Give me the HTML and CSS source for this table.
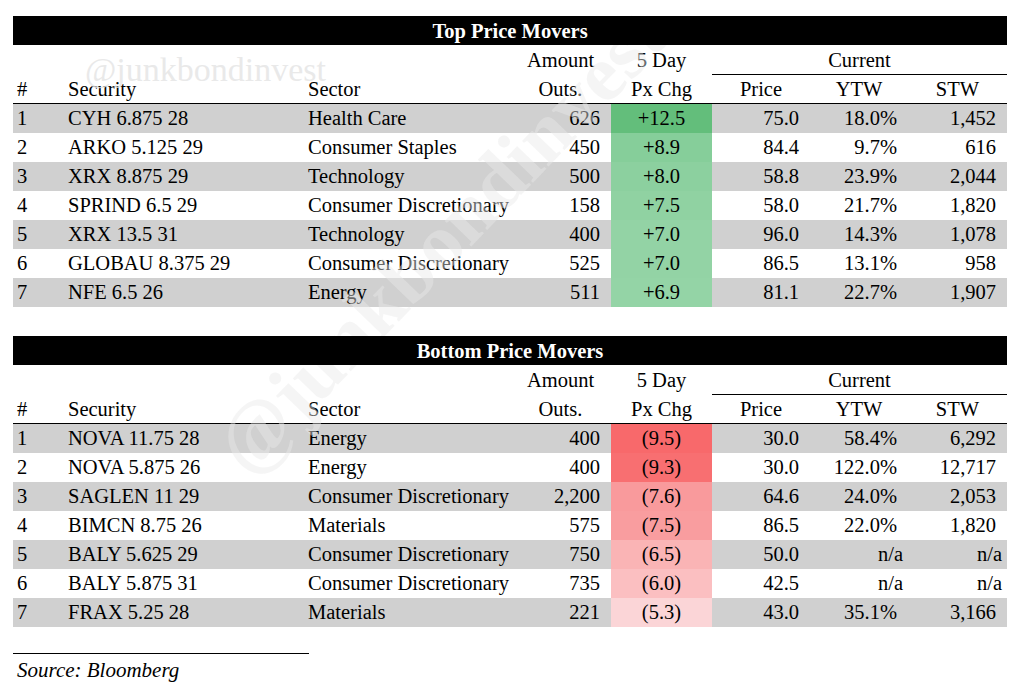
FILE: index.html
```html
<!DOCTYPE html>
<html>
<head>
<meta charset="utf-8">
<link rel="stylesheet" href="styles.css">
</head>
<body>
<div class="page">
  <section class="movers">
    <div class="title">Top Price Movers</div>
    <table>
      <colgroup>
        <col class="c-num"><col class="c-sec"><col class="c-sector"><col class="c-amt"><col class="c-chg"><col class="c-price"><col class="c-ytw"><col class="c-stw">
      </colgroup>
      <thead>
        <tr class="h1">
          <th></th><th></th><th></th><th class="ctr">Amount</th><th class="ctr">5 Day</th><th class="ctr current" colspan="3">Current</th>
        </tr>
        <tr class="h2">
          <th class="lft">#</th><th class="lft">Security</th><th class="lft">Sector</th><th class="ctr">Outs.</th><th class="ctr">Px Chg</th><th class="ctr">Price</th><th class="ctr">YTW</th><th class="ctr">STW</th>
        </tr>
      </thead>
      <tbody>
        <tr><td>1</td><td>CYH 6.875 28</td><td class="sector">Health Care</td><td class="num">626</td><td class="chg g1">+12.5</td><td class="num">75.0</td><td class="num">18.0%</td><td class="num">1,452</td></tr>
        <tr><td>2</td><td>ARKO 5.125 29</td><td class="sector">Consumer Staples</td><td class="num">450</td><td class="chg g2">+8.9</td><td class="num">84.4</td><td class="num">9.7%</td><td class="num">616</td></tr>
        <tr><td>3</td><td>XRX 8.875 29</td><td class="sector">Technology</td><td class="num">500</td><td class="chg g3">+8.0</td><td class="num">58.8</td><td class="num">23.9%</td><td class="num">2,044</td></tr>
        <tr><td>4</td><td>SPRIND 6.5 29</td><td class="sector">Consumer Discretionary</td><td class="num">158</td><td class="chg g4">+7.5</td><td class="num">58.0</td><td class="num">21.7%</td><td class="num">1,820</td></tr>
        <tr><td>5</td><td>XRX 13.5 31</td><td class="sector">Technology</td><td class="num">400</td><td class="chg g5">+7.0</td><td class="num">96.0</td><td class="num">14.3%</td><td class="num">1,078</td></tr>
        <tr><td>6</td><td>GLOBAU 8.375 29</td><td class="sector">Consumer Discretionary</td><td class="num">525</td><td class="chg g5">+7.0</td><td class="num">86.5</td><td class="num">13.1%</td><td class="num">958</td></tr>
        <tr><td>7</td><td>NFE 6.5 26</td><td class="sector">Energy</td><td class="num">511</td><td class="chg g6">+6.9</td><td class="num">81.1</td><td class="num">22.7%</td><td class="num">1,907</td></tr>
      </tbody>
    </table>
  </section>

  <section class="movers">
    <div class="title">Bottom Price Movers</div>
    <table>
      <colgroup>
        <col class="c-num"><col class="c-sec"><col class="c-sector"><col class="c-amt"><col class="c-chg"><col class="c-price"><col class="c-ytw"><col class="c-stw">
      </colgroup>
      <thead>
        <tr class="h1">
          <th></th><th></th><th></th><th class="ctr">Amount</th><th class="ctr">5 Day</th><th class="ctr current" colspan="3">Current</th>
        </tr>
        <tr class="h2">
          <th class="lft">#</th><th class="lft">Security</th><th class="lft">Sector</th><th class="ctr">Outs.</th><th class="ctr">Px Chg</th><th class="ctr">Price</th><th class="ctr">YTW</th><th class="ctr">STW</th>
        </tr>
      </thead>
      <tbody>
        <tr><td>1</td><td>NOVA 11.75 28</td><td class="sector">Energy</td><td class="num">400</td><td class="chg r1">(9.5)</td><td class="num">30.0</td><td class="num">58.4%</td><td class="num">6,292</td></tr>
        <tr><td>2</td><td>NOVA 5.875 26</td><td class="sector">Energy</td><td class="num">400</td><td class="chg r2">(9.3)</td><td class="num">30.0</td><td class="num">122.0%</td><td class="num">12,717</td></tr>
        <tr><td>3</td><td>SAGLEN 11 29</td><td class="sector">Consumer Discretionary</td><td class="num">2,200</td><td class="chg r3">(7.6)</td><td class="num">64.6</td><td class="num">24.0%</td><td class="num">2,053</td></tr>
        <tr><td>4</td><td>BIMCN 8.75 26</td><td class="sector">Materials</td><td class="num">575</td><td class="chg r4">(7.5)</td><td class="num">86.5</td><td class="num">22.0%</td><td class="num">1,820</td></tr>
        <tr><td>5</td><td>BALY 5.625 29</td><td class="sector">Consumer Discretionary</td><td class="num">750</td><td class="chg r5">(6.5)</td><td class="num">50.0</td><td class="num na">n/a</td><td class="num na">n/a</td></tr>
        <tr><td>6</td><td>BALY 5.875 31</td><td class="sector">Consumer Discretionary</td><td class="num">735</td><td class="chg r6">(6.0)</td><td class="num">42.5</td><td class="num na">n/a</td><td class="num na">n/a</td></tr>
        <tr><td>7</td><td>FRAX 5.25 28</td><td class="sector">Materials</td><td class="num">221</td><td class="chg r7">(5.3)</td><td class="num">43.0</td><td class="num">35.1%</td><td class="num">3,166</td></tr>
      </tbody>
    </table>
  </section>

  <div class="source">Source: Bloomberg</div>

  <span class="wm wm-small">@junkbondinvest</span>
  <span class="wm wm-diag">@junkbondinvest</span>
</div>
</body>
</html>
```

FILE: styles.css
```css
html, body {
  margin: 0;
  padding: 0;
  background: #ffffff;
}

body {
  font-family: "Liberation Serif", "Times New Roman", serif;
  font-size: 20.5px;
  color: #000;
  overflow: hidden;
}

.page {
  position: relative;
  width: 994px;
  padding: 16px 0 20px 13px;
}

.movers {
  margin-bottom: 29px;
}

.title {
  position: relative;
  z-index: 2;
  height: 29px;
  line-height: 31px;
  background: #000;
  color: #fff;
  font-weight: bold;
  text-align: center;
}

table {
  position: relative;
  z-index: 0;
  width: 994px;
  table-layout: fixed;
  border-collapse: collapse;
  border-spacing: 0;
}

.c-num { width: 50px; }
.c-sec { width: 240px; }
.c-sector { width: 207px; }
.c-amt { width: 101px; }
.c-chg { width: 101px; }
.c-price { width: 98px; }
.c-ytw { width: 98px; }
.c-stw { width: 99px; }

th, td {
  padding: 0;
  white-space: nowrap;
  overflow: hidden;
  font-weight: normal;
}

th {
  height: 29px;
  line-height: 29px;
  vertical-align: middle;
}

.h1 th {
  padding-top: 1px;
  height: 28px;
  line-height: 28px;
}

.h1 .current {
  height: 27px;
  border-bottom: 1px solid #000;
}

.h2 th {
  height: 28px;
  line-height: 28px;
  border-bottom: 1px solid #000;
}

th.lft {
  text-align: left;
}

th.ctr {
  text-align: center;
}

.h2 th:nth-child(1) { padding-left: 4px; }
.h2 th:nth-child(2) { padding-left: 5px; }
.h2 th:nth-child(3) { padding-left: 5px; }

td {
  height: 29px;
  line-height: 29px;
  text-align: left;
}

tbody tr:nth-child(odd) td {
  background: #d0d0d0;
}

td:nth-child(1) { padding-left: 4px; }
td:nth-child(2) { padding-left: 5px; }
td.sector { padding-left: 5px; text-overflow: clip; }

td.num {
  text-align: right;
  padding-right: 11px;
}

td.num.na {
  padding-right: 5px;
}

td.chg {
  text-align: center;
}

tbody tr td.g1 { background: #63be7b; }
tbody tr td.g2 { background: #86ce9a; }
tbody tr td.g3 { background: #8cd09f; }
tbody tr td.g4 { background: #90d2a2; }
tbody tr td.g5 { background: #93d3a5; }
tbody tr td.g6 { background: #94d4a6; }

tbody tr td.r1 { background: #f8696b; }
tbody tr td.r2 { background: #f86f71; }
tbody tr td.r3 { background: #f99a9c; }
tbody tr td.r4 { background: #f99d9f; }
tbody tr td.r5 { background: #fab4b5; }
tbody tr td.r6 { background: #fbbfc1; }
tbody tr td.r7 { background: #fbd5d7; }

.source {
  width: 292px;
  border-top: 1px solid #000;
  margin-top: -3px;
  padding-left: 4px;
  font-style: italic;
  font-size: 21px;
  line-height: 32px;
}

.wm {
  position: absolute;
  z-index: 1;
  white-space: nowrap;
  pointer-events: none;
  font-family: "Liberation Serif", "Times New Roman", serif;
}

.wm-small {
  left: 85px;
  top: 50px;
  font-size: 34px;
  line-height: 40px;
  color: rgba(228, 228, 228, 0.8);
}

.wm-diag {
  left: 440px;
  top: 240px;
  font-size: 80px;
  font-weight: bold;
  line-height: 80px;
  color: rgba(232, 232, 232, 0.45);
  transform: translate(-50%, -50%) rotate(-46deg);
}
```
